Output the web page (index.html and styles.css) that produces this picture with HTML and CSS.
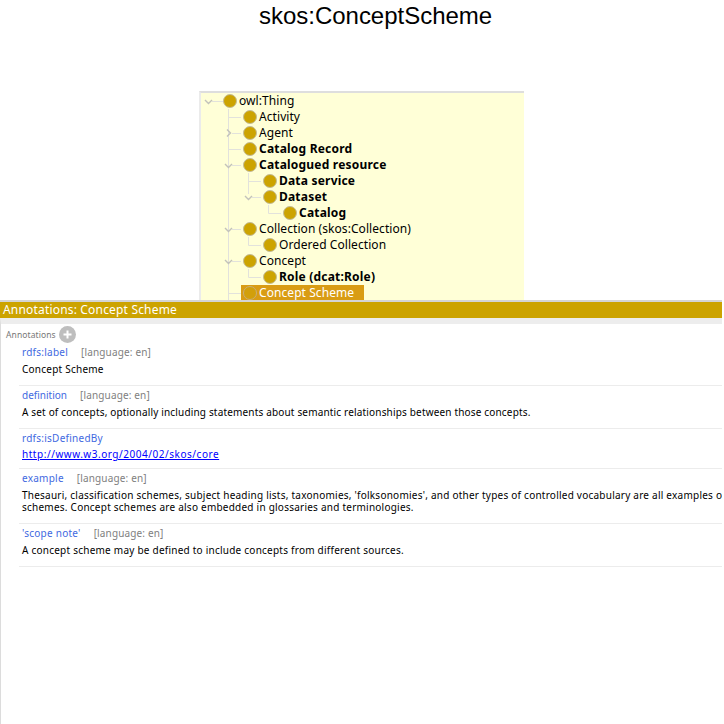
FILE: index.html
```
<!DOCTYPE html>
<html lang="en">
<head>
<meta charset="utf-8">
<title>skos:ConceptScheme</title>
<link rel="stylesheet" href="styles.css">
</head>
<body>
<h1 class="title"><span>skos:ConceptScheme</span></h1>
<div class="tree">
  <svg class="guides" width="323" height="208" viewBox="201 93 323 208" fill="none">
    <path class="guide" d="M212 101.5H223M228.5 109V301M228 117.5H241M232 133.5H241M228 149.5H241M232 165.5H241M248.5 173V194M248 181.5H261M252 197.5H261M268.5 205V213.5H281M232 229.5H241M248.5 237V245.5H261M232 261.5H241M248.5 269V277.5H261M228 293.5H241"/>
    <path class="chevron" d="M205 100L208.500 103.500L212 100M227 129.500L230.500 133L227 136.500M225 164L228.500 167.500L232 164M245 196L248.500 199.500L252 196M225 228L228.500 231.500L232 228M225 260L228.500 263.500L232 260"/>
  </svg>
  <div class="row d0"><i class="dot"></i><span>owl:Thing</span></div>
  <div class="row d1"><i class="dot"></i><span>Activity</span></div>
  <div class="row d1"><i class="dot"></i><span>Agent</span></div>
  <div class="row d1 bold"><i class="dot"></i><span>Catalog Record</span></div>
  <div class="row d1 bold"><i class="dot"></i><span>Catalogued resource</span></div>
  <div class="row d2 bold"><i class="dot"></i><span>Data service</span></div>
  <div class="row d2 bold"><i class="dot"></i><span>Dataset</span></div>
  <div class="row d3 bold"><i class="dot"></i><span>Catalog</span></div>
  <div class="row d1"><i class="dot"></i><span>Collection (skos:Collection)</span></div>
  <div class="row d2"><i class="dot"></i><span>Ordered Collection</span></div>
  <div class="row d1"><i class="dot"></i><span>Concept</span></div>
  <div class="row d2 bold"><i class="dot"></i><span>Role (dcat:Role)</span></div>
  <div class="row d1 selected"><i class="dot"></i><span>Concept Scheme</span></div>
</div>
<section class="panel">
  <h2 class="bar"><span>Annotations: Concept Scheme</span></h2>
  <div class="content">
    <div class="heading"><span>Annotations</span>
      <svg width="17" height="17" viewBox="0 0 17 17"><circle cx="8.500" cy="8.500" r="8.500" fill="#bebebe"/><path d="M8.500 4.500V12.500M4.500 8.500H12.500" stroke="#fff" stroke-width="2"/></svg>
    </div>
    <div class="item h43"><div class="meta"><span class="prop wide">rdfs:label</span><span class="lang">[language: en]</span></div><p><span>Concept Scheme</span></p></div>
    <div class="item h43"><div class="meta"><span class="prop">definition</span><span class="lang">[language: en]</span></div><p class="tight"><span>A set of concepts, optionally including statements about semantic relationships between those concepts.</span></p></div>
    <div class="item h40"><div class="meta"><span class="prop wide">rdfs:isDefinedBy</span></div><p><a href="http://www.w3.org/2004/02/skos/core">http://www.w3.org/2004/02/skos/core</a></p></div>
    <div class="item h55"><div class="meta"><span class="prop wide">example</span><span class="lang">[language: en]</span></div><p>Thesauri, classification schemes, subject heading lists, taxonomies, 'folksonomies', and other types of controlled vocabulary are all examples of<br>schemes. Concept schemes are also embedded in glossaries and terminologies.</p></div>
    <div class="item h43"><div class="meta"><span class="prop wide">'scope note'</span><span class="lang">[language: en]</span></div><p><span>A concept scheme may be defined to include concepts from different sources.</span></p></div>
  </div>
</section>
</body>
</html>
```
FILE: styles.css
```
* { box-sizing: border-box; }
html, body { margin: 0; height: 100%; overflow: hidden; background: #fff; }
body {
  display: flex;
  flex-direction: column;
  font-family: "Noto Sans", "Open Sans", sans-serif;
  color: #000;
  white-space: nowrap;
}
.title {
  margin: 0 0 0 259px;
  height: 91px;
  padding-top: 2px;
  font: 400 24px/28px "Liberation Sans", Arial, sans-serif;
  letter-spacing: -0.02px;
}
.tree {
  position: relative;
  flex: none;
  width: 325px;
  height: 209px;
  margin-left: 199px;
  border-top: 2px solid #dedede;
  border-left: 2px solid #ebebeb;
  background: #ffffd7;
  overflow: hidden;
}
.guides { position: absolute; left: 0; top: 0; }
.guide { stroke: #e2e2dc; }
.chevron { stroke: #c2c2bb; stroke-width: 1.4; }
.row {
  position: relative;
  display: flex;
  align-items: center;
  width: max-content;
  height: 16px;
  font-size: 12px;
  line-height: 16px;
  letter-spacing: 0.07px;
}
.d0 { margin-left: 21px; }
.d1 { margin-left: 41px; }
.d2 { margin-left: 61px; }
.d3 { margin-left: 81px; }
.dot {
  flex: none;
  width: 14px;
  height: 14px;
  margin: 0 2px 0 1px;
  border: 1px solid #c4bc98;
  border-radius: 50%;
  background: #cca300;
}
.bold { font-weight: 700; letter-spacing: 0.2px; }
.selected { margin-left: 40px; width: 123px; padding-left: 1px; background: #d99c14; color: #fff; }
.selected .dot { border-color: #c7ae79; background: #d29f0b; }
.panel { flex: 1; display: flex; flex-direction: column; width: 722px; border-top: 2px solid #d4d4d4; }
.bar {
  flex: none;
  height: 16px;
  margin: 0;
  padding-left: 3px;
  background: #cca300;
  color: #fff;
  font-size: 12px;
  font-weight: 400;
  line-height: 16px;
  letter-spacing: 0.18px;
}
.content {
  flex: 1;
  border-top: 6px solid #ededed;
  border-left: 1px solid #dcdcdc;
  font-size: 10px;
  overflow: hidden;
}
.heading {
  display: flex;
  align-items: center;
  gap: 3px;
  height: 19px;
  padding: 2px 0 0 5px;
  color: #777;
  font-size: 8.500px;
  letter-spacing: 0.1px;
}
.item {
  margin-left: 18px;
  padding: 2px 0 0 3px;
  border-bottom: 1px solid #ececec;
  overflow: hidden;
}
.h43 { height: 43px; }
.h40 { height: 40px; }
.h55 { height: 55px; }
.meta { display: flex; gap: 13px; height: 14px; line-height: 14px; }
.item p { margin: 4px 0 0; line-height: 12px; letter-spacing: 0.235px; }
.item .tight { letter-spacing: 0.17px; }
.h40 p { margin-top: 3px; }
.prop { color: #4169e1; }
.wide { letter-spacing: 0.25px; }
.lang { color: #808080; letter-spacing: 0.15px; }
.item a { color: #00f; letter-spacing: 0.53px; }
```
